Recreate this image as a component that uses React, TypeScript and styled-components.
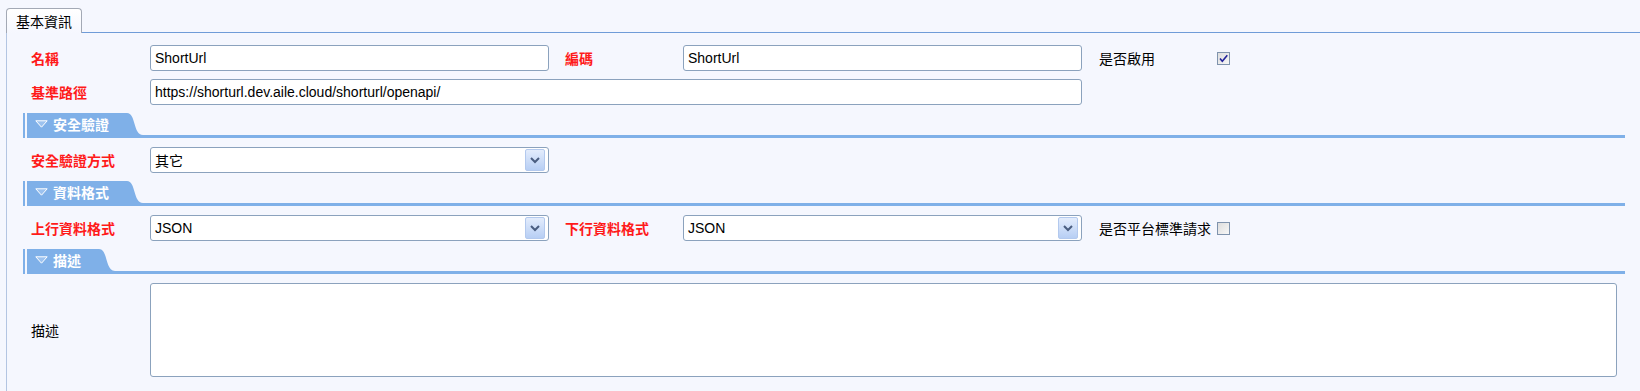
import React from 'react'
import styled, { createGlobalStyle } from 'styled-components'

const GlobalStyle = createGlobalStyle`
  html, body {
    margin: 0;
    padding: 0;
    background: #f5f7fe;
  }
  body {
    font-family: "Liberation Sans", "Noto Sans CJK TC", sans-serif;
    font-size: 14px;
    color: #000;
  }
  * { box-sizing: border-box; }
`

const blue = '#7fb0e8'
const fieldBorder = '#8ba2bd'

const Page = styled.div`
  min-height: 391px;
  padding-top: 8px;
  display: flex;
  flex-direction: column;
`

const TabStrip = styled.div`
  display: flex;
  padding-left: 6px;
`

const MainTab = styled.div`
  height: 25px;
  margin-bottom: -1px;
  padding: 0 9px;
  display: flex;
  align-items: center;
  border: 1px solid #a3a9b5;
  border-bottom: none;
  border-radius: 4px 4px 0 0;
  background: linear-gradient(#ffffff, #f5f7fe);
  position: relative;
  z-index: 1;
`

const Panel = styled.div`
  flex: 1;
  margin-left: 6px;
  border-top: 1px solid #6f9cd8;
  border-left: 1px solid #b3c5e2;
  padding: 12px 15px 14px 16px;
  display: flex;
  flex-direction: column;
`

const FormRow = styled.div<{ $height?: number }>`
  display: grid;
  grid-template-columns: 119px 415px 118px 416px 118px 1fr;
  align-items: center;
  height: ${p => p.$height ?? 26}px;
  padding-left: 8px;
  & + & { margin-top: 8px; }
`

const Label = styled.div<{ $required?: boolean }>`
  color: ${p => (p.$required ? '#ff1a1a' : '#000')};
  font-weight: ${p => (p.$required ? 'bold' : 'normal')};
  white-space: nowrap;
`

const TextInput = styled.input<{ $width?: number; $span?: number }>`
  width: ${p => p.$width ?? 399}px;
  height: 26px;
  grid-column: span ${p => p.$span ?? 1};
  padding: 0 4px;
  border: 1px solid ${fieldBorder};
  border-radius: 3px;
  background: #fff;
  font: inherit;
  color: #000;
  outline: none;
`

const SelectBox = styled.div`
  width: 399px;
  height: 26px;
  display: flex;
  align-items: center;
  padding: 0 3px 0 4px;
  border: 1px solid ${fieldBorder};
  border-radius: 3px;
  background: #fff;
`

const SelectValue = styled.span`
  flex: 1;
`

const ArrowButton = styled.span`
  width: 20px;
  height: 22px;
  display: flex;
  align-items: center;
  justify-content: center;
  border: 1px solid #b3c9ee;
  border-radius: 2px;
  background: linear-gradient(#e3ecfc, #b7cef4);
`

const TextArea = styled.textarea`
  grid-column: 2 / -1;
  width: 1467px;
  height: 94px;
  border: 1px solid ${fieldBorder};
  border-radius: 3px;
  background: #fff;
  resize: none;
  font: inherit;
  outline: none;
`

const CheckCell = styled.div`
  display: flex;
  align-items: center;
`

const SectionHeader = styled.div`
  display: flex;
  height: 25px;
  margin: 8px 0 9px;
`

const SideBar = styled.div`
  width: 2px;
  margin-right: 2px;
  background: ${blue};
`

const HeaderBody = styled.div`
  flex: 1;
  display: flex;
  flex-direction: column;
`

const HeaderTabRow = styled.div`
  display: flex;
  height: 22px;
`

const HeaderTab = styled.div`
  display: flex;
  align-items: center;
  gap: 5px;
  padding: 0 18px 0 8px;
  background: ${blue};
  color: #fff;
  font-weight: bold;
`

const HeaderLine = styled.div`
  height: 3px;
  background: ${blue};
`

function Chevron() {
  return (
    <svg width="12" height="8" viewBox="0 0 12 8">
      <path d="M2 2 L6 6 L10 2" fill="none" stroke="#4a5d80" strokeWidth="2" />
    </svg>
  )
}

function Select({ value }: { value: string }) {
  return (
    <SelectBox>
      <SelectValue>{value}</SelectValue>
      <ArrowButton><Chevron /></ArrowButton>
    </SelectBox>
  )
}

function CheckBox({ checked }: { checked?: boolean }) {
  return (
    <svg width="13" height="13" viewBox="0 0 13 13">
      <defs>
        <linearGradient id="cbg" x1="0" y1="0" x2="1" y2="1">
          <stop offset="0" stopColor="#dcdcdc" />
          <stop offset="1" stopColor="#f8f8f8" />
        </linearGradient>
      </defs>
      <rect x="0.5" y="0.5" width="12" height="12" fill="url(#cbg)" stroke="#7f93ad" />
      {checked && (
        <path d="M3 6.5 L5.3 9.3 L10.3 3.2" fill="none" stroke="#23239a" strokeWidth="1.6" />
      )}
    </svg>
  )
}

function Section({ title }: { title: string }) {
  return (
    <SectionHeader>
      <SideBar />
      <HeaderBody>
        <HeaderTabRow>
          <HeaderTab>
            <svg width="13" height="8" viewBox="0 0 13 8">
              <path d="M0.8 0.8 L12.2 0.8 L6.5 7.2 Z" fill="#9cc2ef" stroke="#fff" strokeWidth="1" />
            </svg>
            {title}
          </HeaderTab>
          <svg width="16" height="22" viewBox="0 0 16 22">
            <path d="M0 0 C9 0 6 22 16 22 L0 22 Z" fill={blue} />
          </svg>
        </HeaderTabRow>
        <HeaderLine />
      </HeaderBody>
    </SectionHeader>
  )
}

export default function App() {
  return (
    <Page>
      <GlobalStyle />
      <TabStrip>
        <MainTab>基本資訊</MainTab>
      </TabStrip>
      <Panel>
        <FormRow>
          <Label $required>名稱</Label>
          <TextInput defaultValue="ShortUrl" />
          <Label $required>編碼</Label>
          <TextInput defaultValue="ShortUrl" />
          <Label>是否啟用</Label>
          <CheckCell><CheckBox checked /></CheckCell>
        </FormRow>
        <FormRow>
          <Label $required>基準路徑</Label>
          <TextInput $width={932} $span={3} defaultValue="https://shorturl.dev.aile.cloud/shorturl/openapi/" />
        </FormRow>

        <Section title="安全驗證" />
        <FormRow>
          <Label $required>安全驗證方式</Label>
          <Select value="其它" />
        </FormRow>

        <Section title="資料格式" />
        <FormRow>
          <Label $required>上行資料格式</Label>
          <Select value="JSON" />
          <Label $required>下行資料格式</Label>
          <Select value="JSON" />
          <Label>是否平台標準請求</Label>
          <CheckCell><CheckBox /></CheckCell>
        </FormRow>

        <Section title="描述" />
        <FormRow $height={94}>
          <Label>描述</Label>
          <TextArea />
        </FormRow>
      </Panel>
    </Page>
  )
}
